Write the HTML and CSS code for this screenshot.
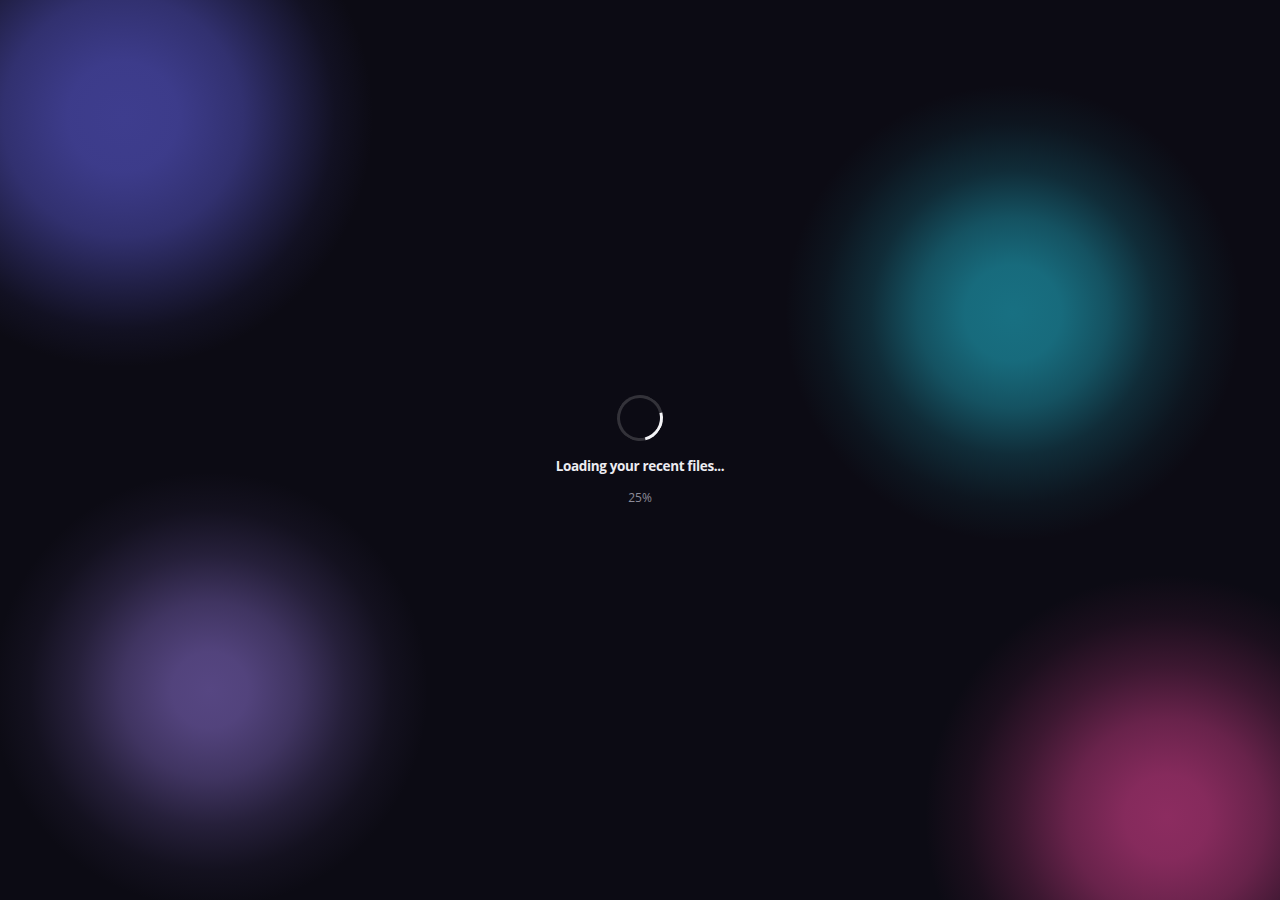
FILE: index.html
```html
<!DOCTYPE html>
<html lang="en">
<head>
<meta charset="utf-8">
<title>Loading</title>
<link rel="stylesheet" href="styles.css">
</head>
<body>
<main class="loader">
  <div class="spinner" role="progressbar" aria-valuenow="25" aria-valuemin="0" aria-valuemax="100"></div>
  <p class="loader-title">Loading your recent files...</p>
  <p class="loader-percent">25%</p>
</main>
</body>
</html>
```

FILE: styles.css
```css
html, body {
  margin: 0;
  height: 100%;
}

body {
  background-color: #0c0b14;
  background-image:
    radial-gradient(circle at 123px 117px,
      rgba(62, 61, 142, 1) 0,
      rgba(62, 61, 142, 0.97) 55px,
      rgba(62, 61, 142, 0.75) 120px,
      rgba(62, 61, 142, 0.4) 170px,
      rgba(62, 61, 142, 0.12) 212px,
      rgba(62, 61, 142, 0) 250px),
    radial-gradient(circle at 1013px 313px,
      rgba(24, 112, 130, 1) 0,
      rgba(24, 112, 130, 0.95) 48px,
      rgba(24, 112, 130, 0.7) 95px,
      rgba(24, 112, 130, 0.33) 142px,
      rgba(24, 112, 130, 0.1) 190px,
      rgba(24, 112, 130, 0) 228px),
    radial-gradient(circle at 210px 690px,
      rgba(86, 70, 130, 1) 0,
      rgba(86, 70, 130, 0.95) 38px,
      rgba(86, 70, 130, 0.7) 88px,
      rgba(86, 70, 130, 0.35) 135px,
      rgba(86, 70, 130, 0.1) 180px,
      rgba(86, 70, 130, 0) 218px),
    radial-gradient(circle at 1167px 817px,
      rgba(140, 44, 96, 1) 0,
      rgba(140, 44, 96, 0.95) 42px,
      rgba(140, 44, 96, 0.72) 98px,
      rgba(140, 44, 96, 0.38) 150px,
      rgba(140, 44, 96, 0.12) 200px,
      rgba(140, 44, 96, 0) 242px);
  background-repeat: no-repeat;
  font-family: "Segoe UI", "Open Sans", "Noto Sans", sans-serif;
  color: #ececf1;
}

.loader {
  height: 100%;
  display: flex;
  flex-direction: column;
  align-items: center;
  justify-content: center;
}

.spinner {
  width: 40px;
  height: 40px;
  border: 3px solid rgba(255, 255, 255, 0.16);
  border-right-color: #f4f4f7;
  border-radius: 50%;
  transform: rotate(31deg);
  margin-bottom: 15px;
}

.loader-title {
  margin: 0;
  font-size: 13.5px;
  line-height: 20px;
  font-weight: 700;
  letter-spacing: -0.35px;
  color: #ececf1;
}

.loader-percent {
  margin: 13px 0 0;
  font-size: 12px;
  line-height: 17px;
  color: #8c8b99;
}
```
